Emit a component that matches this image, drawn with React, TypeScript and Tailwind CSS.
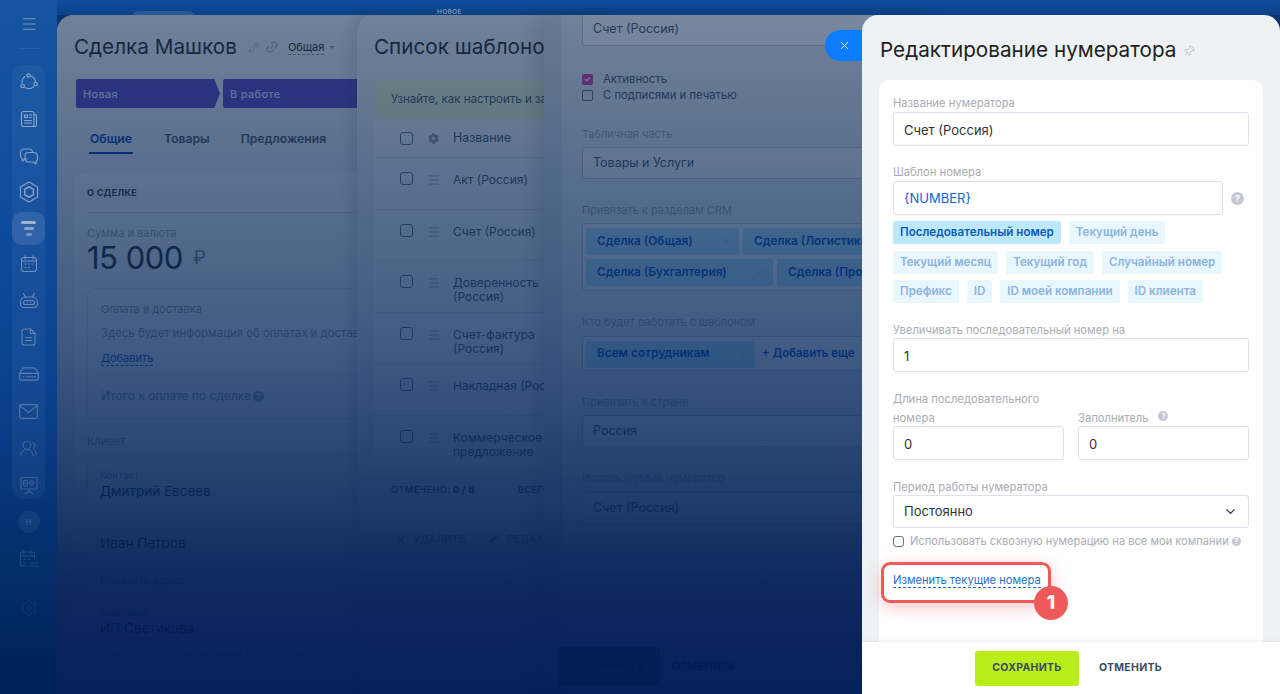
import type { ReactNode } from 'react';
import { ChevronDown, Link2, Menu, Pencil, Pin, Settings, UsersRound, X } from 'lucide-react';
import { FaCog, FaPen, FaTimes } from 'react-icons/fa';

function Help({ className }: { className: string }) {
  return <span className={`flex shrink-0 items-center justify-center rounded-full font-bold leading-none text-white ${className}`}>?</span>;
}

function Check({ className = 'h-[13px] w-[13px]' }: { className?: string }) {
  return <span className={`block shrink-0 rounded-[3px] border-[1.5px] border-[#6b7178] ${className}`} />;
}

function Icon({ size = 20, children }: { size?: number; children: ReactNode }) {
  return (
    <svg width={size} height={size} viewBox="0 0 20 20" fill="none" stroke="currentColor" strokeWidth="1.1" strokeLinecap="round" strokeLinejoin="round">
      {children}
    </svg>
  );
}

const sideIcons = {
  network: (
    <Icon>
      <circle cx="9.5" cy="3.6" r="1.7" />
      <circle cx="3.6" cy="14" r="1.8" />
      <circle cx="16.6" cy="12" r="1.7" />
      <path d="M6 4.6A7 7 0 0 0 3 11M12 4A7 7 0 0 1 16.4 9.6M14.8 14.6A7 7 0 0 1 6.3 15.6" />
    </Icon>
  ),
  news: (
    <Icon>
      <rect x="2.5" y="2.5" width="12.5" height="15" rx="2" />
      <path d="M15 5.5h1a1.5 1.5 0 0 1 1.5 1.5v9a1.5 1.5 0 0 1-1.5 1.5h-3M5.5 6h3v2.5h-3ZM10.5 6h2M10.5 8.5h2M5.5 11.5h7M5.5 14h7" />
    </Icon>
  ),
  chat: (
    <Icon>
      <path d="M8 13H5.5L3.5 15 3 12.5A3.5 3.5 0 0 1 1.500 9.500V6.500A3.500 3.500 0 0 1 5 3H10A3.500 3.500 0 0 1 13.500 6.500" />
      <path d="M9.500 6.500H15A3.500 3.500 0 0 1 18.500 10V12.500A3.500 3.500 0 0 1 17 15.500L17 18 14 16H9.500A3.500 3.500 0 0 1 6 12.500V10A3.500 3.500 0 0 1 9.500 6.500Z" />
    </Icon>
  ),
  hex: (
    <Icon size={22}>
      <path d="M10 1 17.800 5.500V14.500L10 19 2.200 14.500V5.500Z" />
      <path d="M10 5.200 13.900 7.500V12.500L10 14.800 6.100 12.500V7.500Z" strokeWidth="1.4" />
    </Icon>
  ),
  calendar: (
    <Icon>
      <rect x="2.500" y="3.500" width="15" height="14" rx="2.500" />
      <path d="M6 1.800V5M14 1.800V5M2.500 7H17.500M6 10h1M9.500 10h1M13 10h1M6 13.500h1M9.500 13.500h1" />
    </Icon>
  ),
  bot: (
    <Icon>
      <path d="M6.500 6H13.500C16.500 6 18.500 8.500 18.500 11.500V13A3.500 3.500 0 0 1 15 16.500H5A3.500 3.500 0 0 1 1.500 13V11.500C1.500 8.500 3.500 6 6.500 6Z" />
      <path d="M4.500 2.500 6.500 6M15.500 2.500 13.500 6M6.500 9.500H13.500A2 2 0 0 1 13.500 13.500H6.500A2 2 0 0 1 6.500 9.500ZM8 11.500h.5M11.500 11.500h.5" />
    </Icon>
  ),
  file: (
    <Icon>
      <path d="M5 2H11.500L16 6.500V16A2 2 0 0 1 14 18H5A2 2 0 0 1 3 16V4A2 2 0 0 1 5 2Z" />
      <path d="M11.500 2V6.500H16M6.500 10.500H12.500M6.500 13.500H12.500" />
    </Icon>
  ),
  drive: (
    <Icon size={22}>
      <path d="M1.500 9.500 4 5.500A2 2 0 0 1 5.500 4.500H14.500A2 2 0 0 1 16 5.500L18.500 9.500V14A1.500 1.500 0 0 1 17 15.500H3A1.500 1.500 0 0 1 1.500 14Z" />
      <path d="M1.500 9.500H18.500M4.500 12.500h1M8 12.500h8" />
    </Icon>
  ),
  mail: (
    <Icon size={21}>
      <rect x="1.500" y="3.500" width="17" height="13" rx="1.500" />
      <path d="M2 4.500 10 11 18 4.500" />
    </Icon>
  ),
  board: (
    <Icon>
      <path d="M2 2.500H18V14H2ZM10 14V16M6 19 10 16 14 19" />
      <path d="M5 5.500H8.500V11H5ZM5 8.200H8.500" strokeWidth="1" />
      <path d="M13 5.500 15.500 8.200 13 11 10.500 8.200ZM10.500 8.200H15.500" strokeWidth="1" />
    </Icon>
  ),
  calendarList: (
    <Icon>
      <path d="M8 17H3.500A2 2 0 0 1 1.500 15V5A2 2 0 0 1 3.500 3H13.500A2 2 0 0 1 15.500 5V10M5 1V4.500M12 1V4.500M1.500 7H15.500M5 10.500h1M9 10.500h1M5 14h1M11 14H19M11 17H19" />
    </Icon>
  ),
};

function SideIcon({ className, children }: { className: string; children: ReactNode }) {
  return <span className={`flex h-[22px] items-center ${className}`}>{children}</span>;
}

function Sidebar() {
  return (
    <aside className="absolute inset-y-0 left-0 z-20 flex w-[57px] flex-col items-center bg-[linear-gradient(180deg,#15559f_0%,#0f4c9c_30%,#0a4290_55%,#05306f_78%,#00245a_95%)]">
      <Menu className="mt-[15px] h-[18px] w-[18px] text-[#7d9cc6]" strokeWidth={1.3} />
      <span className="mt-[15px] h-px w-[22px] bg-white/[0.07]" />
      <nav className="mt-[16px] flex h-[434px] w-[33px] flex-col items-center rounded-[10px] bg-white/[0.045] pt-[6px]">
        <SideIcon className="text-[#8ea6cc]">{sideIcons.network}</SideIcon>
        <SideIcon className="mt-[15px] text-[#8ca4ca]">{sideIcons.news}</SideIcon>
        <SideIcon className="mt-[15px] text-[#88a1c8]">{sideIcons.chat}</SideIcon>
        <SideIcon className="mt-[14px] text-[#829cc4]">{sideIcons.hex}</SideIcon>
        <span className="mt-[9px] flex h-[33px] w-[33px] items-center justify-center rounded-[10px] bg-white/10">
          <span className="flex flex-col items-center gap-[3px]">
            <span className="h-[3px] w-[15px] rounded-full bg-[#9fb4d2]" />
            <span className="h-[3px] w-[10px] rounded-full bg-[#8aa3c7]" />
            <span className="h-[3px] w-[6px] rounded-full bg-[#7893bb]" />
          </span>
        </span>
        <SideIcon className="mt-[8px] text-[#7491bc]">{sideIcons.calendar}</SideIcon>
        <SideIcon className="mt-[15px] text-[#6e8bb8]">{sideIcons.bot}</SideIcon>
        <SideIcon className="mt-[14px] text-[#6583b1]">{sideIcons.file}</SideIcon>
        <SideIcon className="mt-[15px] text-[#5d7dad]">{sideIcons.drive}</SideIcon>
        <SideIcon className="mt-[15px] text-[#5374a6]">{sideIcons.mail}</SideIcon>
        <SideIcon className="mt-[15px] text-[#47699c]"><UsersRound size={19} strokeWidth={1.1} /></SideIcon>
        <SideIcon className="mt-[15px] text-[#3e6094]">{sideIcons.board}</SideIcon>
      </nav>
      <span className="mt-[12px] flex h-[22px] w-[22px] items-center justify-center rounded-full bg-white/[0.05] text-[8px] font-semibold text-[#315588]">Н</span>
      <SideIcon className="mt-[15px] text-[#234a84]">{sideIcons.calendarList}</SideIcon>
      <Settings className="mt-[29px] text-[#133c78]" size={18} strokeWidth={1.1} />
    </aside>
  );
}

function DealPanel() {
  return (
    <section className="absolute bottom-0 left-[57px] top-[15px] z-[1] w-[340px] overflow-hidden rounded-t-[16px] bg-[#eef2f4] pl-[17px] pt-[18px] text-[#333]">
      <div className="flex h-[28px] items-center">
        <h1 className="text-[20.700px] font-normal whitespace-nowrap">Сделка Машков</h1>
        <Pencil className="ml-[11px] text-[#b4b8bd]" size={11} />
        <Link2 className="ml-[6px] -rotate-45 text-[#b4b8bd]" size={14} />
        <span className="ml-[9px] border-b border-dashed border-[#8d949c] text-[11px] leading-[14px]">Общая</span>
        <span className="ml-[5px] mt-px h-0 w-0 border-x-[3px] border-t-[3px] border-x-transparent border-t-[#a0a5ab]" />
      </div>
      <div className="ml-[2px] mt-[18px] flex h-[29px] gap-[3px] text-[11px] font-medium tracking-[0.3px] text-[#dfe3ff]">
        <div className="flex w-[144px] items-center rounded-l-[2px] bg-[#664fc8] pl-[7px] pt-px [clip-path:polygon(0_0,96%_0,100%_50%,96%_100%,0_100%)]">Новая</div>
        <div className="flex w-[144px] items-center rounded-l-[2px] bg-[#664fc8] pl-[7px] pt-px">В работе</div>
      </div>
      <div className="ml-[15px] mt-[20px] flex h-[26px] items-start gap-[31px] pt-px text-[12.200px] font-semibold text-[#535c69]">
        <span className="h-[25px] border-b-2 border-[#0b4ac0] px-px leading-[20px] text-[#0b4ac0]">Общие</span>
        <span className="leading-[20px]">Товары</span>
        <span className="leading-[20px]">Предложения</span>
      </div>
      <div className="mt-[19px] w-[320px] rounded-[10px] bg-white/70 px-[13px]">
        <div className="flex h-[40px] items-center border-b border-[#dfe3e8] pt-px text-[9px] font-bold tracking-[0.3px] text-[#444]">О СДЕЛКЕ</div>
        <div className="mt-[12px] h-[16px] text-[11px] leading-[16px] text-[#a8adb4]">Сумма и валюта</div>
        <div className="flex h-[34px] items-center text-[31px] text-[#333]">
          <span className="tracking-[-0.5px]">15 000</span>
          <span className="ml-[10px] text-[19px] text-[#8d949c]">₽</span>
        </div>
        <div className="mt-[13px] rounded-t-[8px] border border-[#e4e7ea] px-[13px] pb-[14px] pt-[12px] text-[11px] leading-[16px] text-[#9aa0a8]">
          <div className="h-[16px]">Оплата и доставка</div>
          <div className="mt-[8px] h-[16px] whitespace-nowrap text-[11.400px]">Здесь будет информация об оплатах и доставках</div>
          <div className="mt-[9px] h-[16px]"><span className="border-b border-dashed border-[#2067c9] text-[11px] text-[#2067c9]">Добавить</span></div>
          <div className="mt-[8px] border-t border-[#e4e7ea]" />
          <div className="mt-[13px] flex h-[16px] items-center whitespace-nowrap text-[12px]">
            Итого к оплате по сделке
            <Help className="ml-[2px] h-[11px] w-[11px] bg-[#a8adb4] text-[8px]" />
          </div>
        </div>
        <div className="mt-[14px] h-[16px] text-[11px] leading-[16px] text-[#9aa0a8]">Клиент</div>
        <div className="mt-[4px] h-[240px] border border-b-0 border-[#e4e7ea] px-[12px] pt-[15px]">
          <div className="h-[12px] text-[10px] leading-[12px] text-[#9aa0a8]">Контакт</div>
          <div className="h-[20px] text-[13.500px] leading-[20px]">Дмитрий Евсеев</div>
          <div className="mt-[32px] h-[20px] text-[13.500px] leading-[20px]">Иван Петров</div>
          <div className="mt-[19px] h-[16px] text-[11px] leading-[16px] text-[#9aa0a8]">Показать адрес</div>
          <div className="mt-[18px] h-[12px] text-[10px] leading-[12px] text-[#9aa0a8]">Компания</div>
          <div className="h-[20px] text-[13.500px] leading-[20px]">ИП Светикова</div>
          <div className="mt-[7px] h-[16px] whitespace-nowrap text-[11px] leading-[16px] text-[#9aa0a8]">Клиент: Информационные технологии</div>
        </div>
      </div>
    </section>
  );
}

const templates: { lines: string[]; height: string }[] = [
  { lines: ['Акт (Россия)'], height: 'h-[52px]' },
  { lines: ['Счет (Россия)'], height: 'h-[51px]' },
  { lines: ['Доверенность', '(Россия)'], height: 'h-[52px]' },
  { lines: ['Счет-фактура', '(Россия)'], height: 'h-[51px]' },
  { lines: ['Накладная (Россия)'], height: 'h-[52px]' },
  { lines: ['Коммерческое', 'предложение'], height: 'h-[51px]' },
];

function TemplatesPanel() {
  return (
    <section className="absolute bottom-0 left-[357px] top-[15px] z-[2] w-[260px] overflow-hidden rounded-t-[16px] bg-[#eef2f4] pl-[17px] pt-[18px] text-[#535c69] shadow-[-6px_0_14px_rgba(0,0,0,0.12)]">
      <h2 className="flex h-[28px] items-center text-[20.700px] font-normal whitespace-nowrap text-[#333]">Список шаблонов</h2>
      <div className="mt-[19px] flex h-[39px] w-[300px] items-center rounded-t-[8px] bg-[#f1fbd0] pl-[17px] text-[11.500px] whitespace-nowrap">Узнайте, как настроить и загрузить</div>
      <div className="flex h-[39px] w-[300px] items-center border-b border-[#dfe3e8] bg-white/70 pl-[26px] pt-px text-[12.400px]">
        <Check />
        <FaCog className="ml-[15px] text-[#9aa0a8]" size={11} />
        <span className="ml-[14px]">Название</span>
      </div>
      {templates.map((t) => (
        <div key={t.lines[0]} className={`flex w-[300px] items-start border-b border-[#e4e7ea] bg-white/70 pl-[26px] pt-[14px] text-[12px] leading-[14px] ${t.height}`}>
          <Check />
          <Menu className="ml-[14px] mt-px text-[#9aa0a8]" size={14} strokeWidth={1.5} />
          <span className="ml-[12px] mt-[1px] whitespace-nowrap">
            {t.lines.map((line) => <span key={line} className="block">{line}</span>)}
          </span>
        </div>
      ))}
      <div className="mt-[15px] flex h-[16px] items-center pl-[17px] text-[9.500px] font-semibold tracking-[0.2px] whitespace-nowrap">
        <span className="w-[127px]">ОТМЕЧЕНО: <b className="font-semibold text-[#222]">0 / 6</b></span>
        <span>ВСЕГО: 6</span>
      </div>
      <div className="mt-[33px] flex h-[16px] items-center pl-[21px] text-[10px] font-semibold tracking-[0.3px] whitespace-nowrap text-[#8d949c]">
        <FaTimes size={11} />
        <span className="ml-[7px]">УДАЛИТЬ</span>
        <FaPen className="ml-[24px]" size={8} />
        <span className="ml-[9px]">РЕДАКТИРОВАТЬ</span>
      </div>
    </section>
  );
}

function GhostField({ children, className }: { children: ReactNode; className: string }) {
  return <div className={`flex w-[300px] items-center rounded-[3px] border border-[#c6cdd3] bg-white pl-[10px] text-[12.500px] text-[#535c69] ${className}`}>{children}</div>;
}

function GhostChip({ label, width }: { label: string; width: string }) {
  return (
    <span className={`flex h-[27px] shrink-0 items-center rounded-[2px] bg-[#bcedfc] pl-[11px] text-[11.800px] font-semibold whitespace-nowrap text-[#1058d0] ${width}`}>
      {label}
      <X className="ml-auto mr-[9px] text-[#9cc6d8]" size={9} strokeWidth={2} />
    </span>
  );
}

function GhostLabel({ children, className }: { children: ReactNode; className: string }) {
  return <div className={`h-[16px] text-[11px] leading-[16px] text-[#a8adb4] ${className}`}>{children}</div>;
}

function FormPanel() {
  return (
    <section className="absolute bottom-0 left-[544px] top-[15px] z-[3] w-[400px] overflow-hidden rounded-t-[16px] bg-[linear-gradient(90deg,#dde2e7_0,#dde2e7_18px,#eef2f4_18px)] pl-[38px] text-[#535c69] shadow-[-10px_0_18px_rgba(0,0,0,0.12)]">
      <GhostField className="h-[31px] rounded-t-none border-t-0 pb-[2px]">Счет (Россия)</GhostField>
      <div className="mt-[24px] flex h-[16px] items-center pt-[2px] text-[11.300px]">
        <span className="flex h-[11px] w-[11px] items-center justify-center rounded-[2px] bg-[#d946a8] text-[8px] font-bold text-white">✓</span>
        <span className="ml-[10px]">Активность</span>
      </div>
      <div className="flex h-[16px] items-center pt-[2px] text-[11.300px]">
        <span className="block h-[11px] w-[11px] rounded-[2px] border border-[#6b7178]" />
        <span className="ml-[10px]">С подписями и печатью</span>
      </div>
      <GhostLabel className="mt-[24px]">Табличная часть</GhostLabel>
      <GhostField className="mt-[5px] h-[32px] pt-px">Товары и Услуги</GhostField>
      <GhostLabel className="mt-[23px]">Привязать к разделам CRM</GhostLabel>
      <div className="mt-[5px] h-[68px] w-[300px] rounded-[3px] border border-[#c6cdd3] bg-white pl-[3px] pt-[4px]">
        <div className="flex gap-[4px]"><GhostChip label="Сделка (Общая)" width="w-[153px]" /><GhostChip label="Сделка (Логистика)" width="w-[160px]" /></div>
        <div className="mt-[4px] flex gap-[4px]"><GhostChip label="Сделка (Бухгалтерия)" width="w-[187px]" /><GhostChip label="Сделка (Продажи)" width="w-[160px]" /></div>
      </div>
      <GhostLabel className="mt-[23px]">Кто будет работать с шаблоном</GhostLabel>
      <div className="mt-[6px] flex h-[35px] w-[300px] items-center rounded-[3px] border border-[#c6cdd3] bg-white pl-[3px] pt-px">
        <GhostChip label="Всем сотрудникам" width="w-[169px]" />
        <span className="ml-[7px] text-[11.400px] font-semibold whitespace-nowrap text-[#1058d0]">+ Добавить еще</span>
      </div>
      <GhostLabel className="mt-[23px]">Привязать к стране</GhostLabel>
      <GhostField className="mt-[5px] h-[32px] pt-px">Россия</GhostField>
      <GhostLabel className="mt-[23px]">Используемый нумератор</GhostLabel>
      <GhostField className="mt-[6px] h-[32px] pt-px">Счет (Россия)</GhostField>
      <div className="-ml-[24px] mt-[123px] flex h-[39px] items-center text-[11px] font-semibold text-black">
        <span className="flex h-full w-[102px] items-center justify-center rounded-[2px] bg-[#5a6a50]">СОХРАНИТЬ</span>
        <span className="ml-[12px]">ОТМЕНИТЬ</span>
      </div>
    </section>
  );
}

function Label({ children, className = '' }: { children: ReactNode; className?: string }) {
  return <div className={`h-[16px] text-[11.200px] leading-[16px] whitespace-nowrap text-[#a8adb4] ${className}`}>{children}</div>;
}

function Input({ value, className = 'mt-px w-full', blue = false }: { value: string; className?: string; blue?: boolean }) {
  return (
    <div className={`flex h-[34px] items-center rounded-[3px] border border-[#dfe0ea] bg-white pl-[10px] text-[13px] ${blue ? 'pt-[2px] text-[#1067d6]' : 'pt-[3px] text-[#333]'} ${className}`}>
      {value}
    </div>
  );
}

function NumberChip({ label, active = false }: { label: string; active?: boolean }) {
  return (
    <span className={`flex h-[23px] items-center rounded-[2px] px-[7px] pt-px text-[11.600px] font-semibold whitespace-nowrap ${active ? 'bg-[#bbe9fb] text-[#0f5bb5]' : 'bg-[#e8f6fe] text-[#8cb4e0]'}`}>
      {label}
    </span>
  );
}

function NumeratorPanel() {
  return (
    <section className="absolute bottom-0 left-[862px] top-[15px] z-30 flex w-[418px] flex-col overflow-hidden rounded-t-[16px] bg-[#eef2f4]">
      <div className="ml-[18px] mt-[21px] flex h-[28px] shrink-0 items-center">
        <h2 className="text-[20.700px] font-normal whitespace-nowrap text-[#222]">Редактирование нумератора</h2>
        <Pin className="ml-[7px] mt-[2px] rotate-45 text-[#c3c8ce]" size={12} />
      </div>
      <div className="ml-[17px] mt-[16px] w-[384px] flex-1 rounded-t-[10px] bg-white px-[14px] pt-[15px]">
        <Label>Название нумератора</Label>
        <Input value="Счет (Россия)" />
        <Label className="mt-[18px]">Шаблон номера</Label>
        <div className="mt-px flex items-center">
          <Input value="{NUMBER}" className="w-[330px]" blue />
          <Help className="ml-[8px] h-[13px] w-[13px] bg-[#c3c8d4] text-[9px]" />
        </div>
        <div className="mt-[6px] flex w-[340px] flex-wrap gap-x-[8px] gap-y-[6.500px]">
          <NumberChip label="Последовательный номер" active />
          <NumberChip label="Текущий день" />
          <NumberChip label="Текущий месяц" />
          <NumberChip label="Текущий год" />
          <NumberChip label="Случайный номер" />
          <NumberChip label="Префикс" />
          <NumberChip label="ID" />
          <NumberChip label="ID моей компании" />
          <NumberChip label="ID клиента" />
        </div>
        <Label className="mt-[18px] pt-px">Увеличивать последовательный номер на</Label>
        <Input value="1" />
        <div className="mt-[18px] grid grid-cols-2 gap-x-[14px]">
          <div>
            <Label className="pt-px">Длина последовательного</Label>
            <Label className="mt-[3px] pt-px">номера</Label>
            <Input value="0" />
          </div>
          <div className="flex flex-col justify-end">
            <Label className="flex items-center pt-px">
              Заполнитель
              <Help className="-mt-[3px] ml-[10px] h-[10px] w-[10px] bg-[#c3c8d4] text-[7px]" />
            </Label>
            <Input value="0" />
          </div>
        </div>
        <Label className="mt-[18px] pt-px">Период работы нумератора</Label>
        <div className="mt-px flex h-[33px] items-center justify-between rounded-[3px] border border-[#dfe0ea] bg-white px-[10px] text-[13px] text-[#333]">
          Постоянно
          <ChevronDown className="text-[#333]" size={15} strokeWidth={2} />
        </div>
        <div className="mt-[5px] flex h-[16px] items-center whitespace-nowrap text-[11.100px] text-[#a8adb4]">
          <Check className="h-[11px] w-[11px]" />
          <span className="ml-[6px]">Использовать сквозную нумерацию на все мои компании</span>
          <Help className="ml-[3px] h-[9px] w-[9px] bg-[#c3c8d4] text-[7px]" />
        </div>
        <div className="relative mt-[23px] h-[16px] text-[11.150px] leading-[16px]">
          <span className="border-b border-dashed border-[#1f6fd0] text-[#1f6fd0]">Изменить текущие номера</span>
          <span className="absolute -left-[12px] -top-[10px] h-[41px] w-[170px] rounded-[9px] border-[3px] border-[#ee5a5a] shadow-[0_4px_16px_rgba(238,90,90,0.35)]" />
          <span className="absolute left-[141px] top-[14px] flex h-[34px] w-[34px] items-center justify-center rounded-full bg-[#ee5a5a] text-[19px] font-extrabold text-white">1</span>
        </div>
      </div>
      <div className="relative flex h-[52px] shrink-0 items-center justify-center bg-white pr-[5px] shadow-[0_-1px_3px_rgba(0,0,0,0.08)]">
        <span className="flex h-[35px] w-[104px] items-center justify-center rounded-[3px] bg-[#b9ee1b] text-[10.500px] font-bold tracking-[0.3px] text-[#3b4b5e]">СОХРАНИТЬ</span>
        <span className="ml-[20px] text-[10.500px] font-bold tracking-[0.3px] text-[#3b4b5e]">ОТМЕНИТЬ</span>
      </div>
    </section>
  );
}

export default function App() {
  return (
    <div className="relative h-[694px] w-[1280px] overflow-hidden bg-[#0f4e9f] font-['Inter',sans-serif]">
      {/* tabs peeking above the stacked sliders */}
      <span className="absolute left-[132px] top-[11px] h-[6px] w-[63px] rounded-t-[8px] bg-white/15" />
      <span className="absolute left-[437px] top-[8px] text-[6.500px] font-semibold tracking-[0.3px] text-[#9fb6d6]">НОВОЕ</span>
      <DealPanel />
      <TemplatesPanel />
      <FormPanel />
      {/* dimming layer over everything that is not the open slider */}
      <div className="absolute inset-0 z-10 bg-[linear-gradient(180deg,rgba(0,34,80,0.02)_0%,rgba(0,30,70,0.25)_2.1%,rgba(0,30,70,0.53)_2.2%,rgba(0,34,88,0.74)_50%,rgba(0,34,88,0.88)_72%,rgba(0,28,84,0.94)_84%,rgba(0,26,84,0.95)_90%,rgba(0,30,85,0.98)_100%)]" />
      <Sidebar />
      <button className="absolute left-[825px] top-[30px] z-20 flex h-[31px] w-[40px] items-center rounded-l-full bg-[#0b7bff] pl-[13px] text-white">
        <X size={13} strokeWidth={1.6} />
      </button>
      <NumeratorPanel />
    </div>
  );
}
